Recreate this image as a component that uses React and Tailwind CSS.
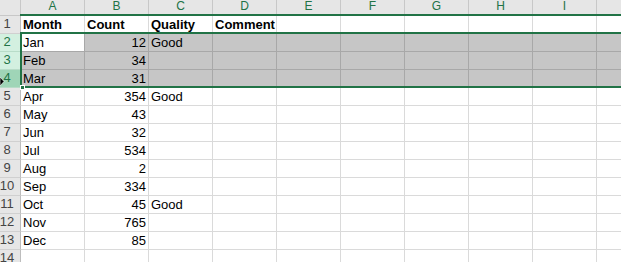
const columns = ['A', 'B', 'C', 'D', 'E', 'F', 'G', 'H', 'I', ''];

const data = [
  ['Month', 'Count', 'Quality', 'Comment'],
  ['Jan', '12', 'Good'],
  ['Feb', '34'],
  ['Mar', '31'],
  ['Apr', '354', 'Good'],
  ['May', '43'],
  ['Jun', '32'],
  ['Jul', '534'],
  ['Aug', '2'],
  ['Sep', '334'],
  ['Oct', '45', 'Good'],
  ['Nov', '765'],
  ['Dec', '85'],
  [],
];

const font = { fontFamily: '"Liberation Sans", Arial, sans-serif' };

const RowHeader = ({ n }) => {
  const selected = n >= 2 && n <= 4;
  const hover = n === 4;
  let cls = 'bg-[#e6e6e6] text-[#444444] border-[#d0d0d0]';
  if (selected) cls = 'bg-[#d3f0e0] text-[#217346] border-[#b8dcc8]';
  if (hover) cls = 'bg-[#9fd5b7] text-[#217346] border-[#b8dcc8]';
  return (
    <div className={`w-[21px] shrink-0 h-full border-r border-b border-r-[#bdbdbd] ${cls} flex items-end justify-center pr-[6px] pb-[2px] text-[13px] leading-[14px]`}>
      {n}
    </div>
  );
};

const Cell = ({ value, col, row }) => {
  const selected = row >= 2 && row <= 4;
  const active = row === 2 && col === 0;
  const bold = row === 1;
  const numeric = value && /^\d+$/.test(value);
  let bg = 'bg-white border-[#dadada]';
  if (selected) bg = active ? 'bg-white border-[#a8a8a8]' : 'bg-[#c6c6c6] border-[#a8a8a8]';
  return (
    <div
      className={`w-[64px] shrink-0 h-full border-r border-b ${bg} flex items-end px-[2px] pb-[1px] text-[13px] leading-[15px] text-black whitespace-nowrap ${numeric ? 'justify-end' : 'justify-start'} ${bold ? 'font-bold' : ''}`}
    >
      {value}
    </div>
  );
};

export default function App() {
  return (
    <div className="relative w-[621px] h-[262px] overflow-hidden bg-white select-none" style={font}>
      {/* column headers */}
      <div className="flex h-[16px]">
        <div className="w-[21px] shrink-0 h-full bg-[#e6e6e6] border-r border-b border-[#c8c8c8]" />
        {columns.map((c, i) => (
          <div
            key={i}
            className="w-[64px] shrink-0 h-full bg-[#e6e6e6] border-r border-b border-[#c8c8c8] flex items-end justify-center pb-[3px] text-[12px] leading-[12px] text-[#217346]"
          >
            {c}
          </div>
        ))}
      </div>

      {data.map((r, i) => (
        <div key={i} className="flex h-[18px]">
          <RowHeader n={i + 1} />
          {columns.map((c, j) => (
            <Cell key={j} value={r[j]} col={j} row={i + 1} />
          ))}
        </div>
      ))}

      {/* selection outline drawn over the grid */}
      <div className="absolute left-[20px] right-0 top-[14px] h-[2px] bg-[#217346]" />
      <div className="absolute left-[20px] right-0 top-[32px] h-[56px] border-t-2 border-b-2 border-l-2 border-[#217346]" />
      <div className="absolute left-[20px] top-[85px] w-[5px] h-[5px] bg-[#217346] border border-white" />

      {/* mouse pointer */}
      <svg className="absolute left-0 top-[77px]" width="5" height="9" viewBox="0 0 5 9">
        <path d="M0 0 L4 4.5 L0 9 Z" fill="#000" stroke="#fff" strokeWidth="0.6" />
      </svg>
    </div>
  );
}
